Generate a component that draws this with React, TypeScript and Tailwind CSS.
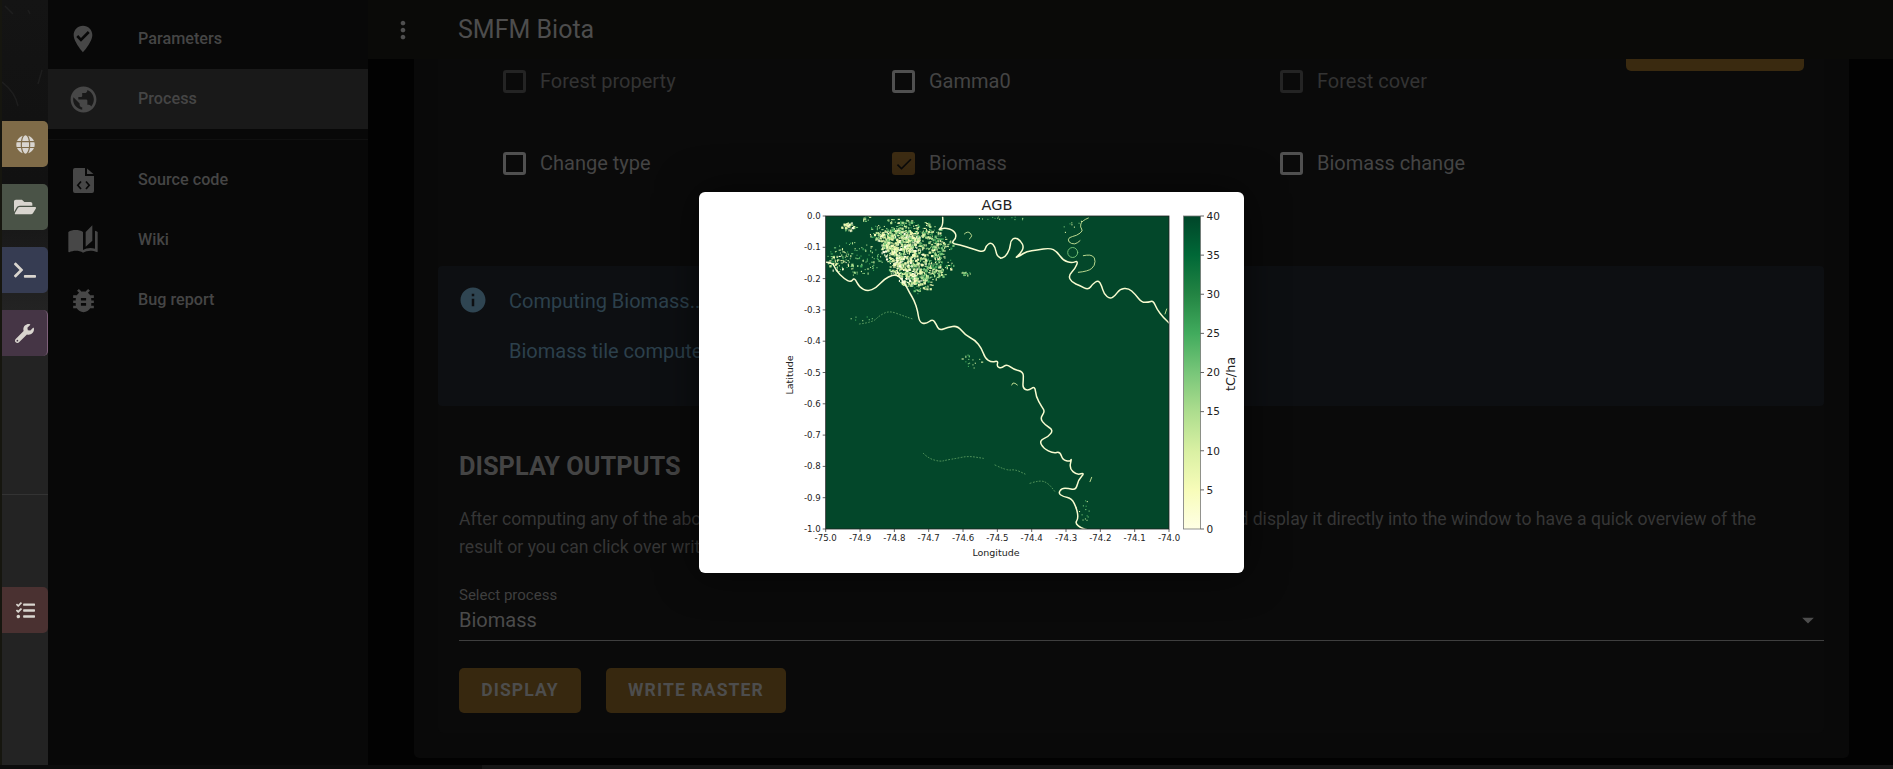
import { FaFolderOpen, FaGlobe, FaTasks, FaTerminal, FaWrench } from "react-icons/fa";
import { MdArrowDropDown, MdAutoStories, MdBugReport, MdCheck, MdInfo, MdMoreVert, MdPublic, MdWhereToVote } from "react-icons/md";
import type { ReactNode } from "react";

type Pt = [number, number];

// river traces read off the 3x crops: [origin x, origin y, crop points]
const crop = (ox: number, oy: number, pts: Pt[]): Pt[] => pts.map(([x, y]) => [ox + x / 3, oy + y / 3]);

const smooth = (pts: Pt[]) => {
  let d = `M${pts[0][0]} ${pts[0][1]}`;
  for (let i = 1; i < pts.length - 1; i++) {
    const mx = (pts[i][0] + pts[i + 1][0]) / 2;
    const my = (pts[i][1] + pts[i + 1][1]) / 2;
    d += `Q${pts[i][0]} ${pts[i][1]} ${mx} ${my}`;
  }
  const last = pts[pts.length - 1];
  return `${d}L${last[0]} ${last[1]}`;
};

const mainRiver = [
  ...crop(826, 214, [[0, 145], [20, 145], [30, 170], [55, 195], [75, 205], [85, 190], [100, 220], [125, 232], [150, 222], [175, 195], [200, 183], [215, 183], [235, 205], [250, 235], [265, 260], [275, 290], [280, 325], [300, 330], [320, 315], [330, 330], [340, 350], [365, 340], [395, 335]]),
  ...crop(930, 330, [[105, 15], [135, 30], [155, 55], [165, 85], [185, 97], [205, 92], [200, 110], [215, 115], [230, 102], [250, 118], [280, 125], [280, 150], [278, 175], [295, 182], [315, 168], [318, 200], [335, 230], [345, 245], [330, 265], [345, 285]]),
  ...crop(900, 430, [[460, 0], [445, 20], [418, 32], [430, 55], [460, 70], [480, 65], [488, 90], [510, 95], [515, 85], [508, 115], [530, 135], [555, 128], [535, 150], [528, 180], [505, 175], [485, 175], [475, 190], [490, 200], [515, 205], [530, 235], [535, 265], [525, 280], [545, 295], [565, 300]]),
];

const topRiver = [
  ...crop(826, 214, [[350, 10], [352, 35], [335, 50], [355, 40], [385, 50], [392, 70], [375, 88], [400, 92], [440, 105], [475, 115], [480, 95], [495, 85], [508, 100], [512, 125], [525, 132]]),
  ...crop(1000, 214, [[0, 133], [15, 130], [30, 105], [32, 80], [45, 70], [62, 80], [72, 100], [60, 120], [45, 132], [60, 125], [80, 112], [110, 108], [150, 102], [170, 112], [190, 140], [215, 147], [235, 140], [225, 165], [205, 185], [215, 205], [240, 215], [265, 228], [278, 210], [295, 198], [305, 215], [312, 240], [330, 255], [345, 245], [360, 225], [385, 222], [405, 240], [425, 265], [445, 265], [460, 260], [470, 285], [490, 310], [508, 328]]),
];

const thinChannels = [
  crop(1000, 214, [[235, 175], [265, 172], [285, 155], [285, 130], [270, 122], [250, 125]]),
  crop(1000, 214, [[265, 12], [245, 20], [240, 40], [250, 50], [230, 65], [205, 70], [205, 85], [225, 92], [240, 80]]),
  crop(1000, 214, [[500, 285], [495, 300]]),
  crop(826, 214, [[415, 60], [425, 50], [440, 65], [430, 75]]),
  crop(930, 330, [[245, 165], [248, 155], [262, 165]]),
  crop(900, 430, [[575, 142], [570, 155]]),
];

const faintChannels = [
  crop(900, 430, [[70, 70], [85, 85], [120, 95], [140, 90], [170, 85], [205, 78], [250, 85]]),
  crop(900, 430, [[285, 105], [320, 122], [345, 118], [375, 132]]),
  crop(900, 430, [[390, 160], [420, 150], [445, 160], [465, 185]]),
  crop(826, 214, [[100, 330], [140, 325], [160, 305], [190, 290], [230, 305], [260, 315]]),
];

// seeded scatter for the cleared patches around the town
const speckle = (() => {
  let s = 41;
  const rnd = () => {
    s = (s + 0x6d2b79f5) | 0;
    let t = Math.imul(s ^ (s >>> 15), 1 | s);
    t = (t + Math.imul(t ^ (t >>> 7), 61 | t)) ^ t;
    return ((t ^ (t >>> 14)) >>> 0) / 4294967296;
  };
  const out: { x: number; y: number; w: number; h: number; c: string }[] = [];
  const bright = ["#f7fcb9", "#e6f5a8", "#d9f0a3", "#ffffe0", "#addd8e", "#78c679"];
  const dim = ["#78c679", "#addd8e", "#41ab5d", "#d9f0a3"];
  const add = (n: number, cx: number, cy: number, rx: number, ry: number, colors: string[], big: number) => {
    for (let i = 0; i < n; i++) {
      const a = rnd() * Math.PI * 2;
      const r = Math.sqrt(rnd());
      out.push({
        x: cx + Math.cos(a) * r * rx,
        y: cy + Math.sin(a) * r * ry,
        w: rnd() < big ? 2.2 : 1.1,
        h: rnd() < big ? 2.2 : 1.1,
        c: colors[Math.floor(rnd() * colors.length)],
      });
    }
  };
  // town: lumpy patches, crop coordinates / 3
  const town: Pt[] = [[175, 70], [195, 90], [215, 60], [240, 80], [185, 105], [225, 115], [265, 95], [255, 65], [235, 145], [215, 165], [255, 170], [275, 135], [245, 195], [275, 190], [205, 130]];
  town.forEach(([x, y]) => add(62, 826 + x / 3, 214 + y / 3, 9, 7, bright, 0.55));
  const townEdge: Pt[] = [[300, 80], [330, 110], [310, 140], [350, 150], [290, 45], [320, 60], [300, 170], [240, 40], [285, 215], [350, 90], [325, 175], [205, 35], [160, 55]];
  townEdge.forEach(([x, y]) => add(42, 826 + x / 3, 214 + y / 3, 11, 8, [...dim, "#f7fcb9"], 0.35));
  add(34, 849, 226, 9, 5, bright, 0.6);
  add(10, 866, 218, 6, 3, dim, 0.3);
  add(130, 855, 258, 28, 17, dim, 0.15);
  add(34, 838, 262, 11, 9, bright, 0.35);
  add(16, 965, 273, 6, 2, dim, 0.3);
  add(14, 1000, 218, 28, 2, dim, 0);
  add(8, 1072, 226, 12, 8, dim, 0);
  add(16, 972, 360, 11, 8, dim, 0.1);
  add(7, 862, 318, 14, 3, dim, 0);
  add(14, 1082, 512, 8, 14, dim, 0);
  return out;
})();

const xTicks = ["-75.0", "-74.9", "-74.8", "-74.7", "-74.6", "-74.5", "-74.4", "-74.3", "-74.2", "-74.1", "-74.0"];
const yTicks = ["0.0", "-0.1", "-0.2", "-0.3", "-0.4", "-0.5", "-0.6", "-0.7", "-0.8", "-0.9", "-1.0"];
const barTicks = [40, 35, 30, 25, 20, 15, 10, 5, 0];

const PL = 825.7;
const PR = 1169;
const PT = 216;
const PB = 529;

const AgbPlot = () => (
  <svg viewBox="699 192 545 381" className="block h-full w-full" style={{ fontFamily: '"DejaVu Sans", sans-serif' }}>
    <defs>
      <linearGradient id="ylgn" x1="0" y1="0" x2="0" y2="1">
        <stop offset="0" stopColor="#004529" />
        <stop offset="0.125" stopColor="#006837" />
        <stop offset="0.25" stopColor="#238443" />
        <stop offset="0.375" stopColor="#41ab5d" />
        <stop offset="0.5" stopColor="#78c679" />
        <stop offset="0.625" stopColor="#addd8e" />
        <stop offset="0.75" stopColor="#d9f0a3" />
        <stop offset="0.875" stopColor="#f7fcb9" />
        <stop offset="1" stopColor="#ffffe5" />
      </linearGradient>
      <clipPath id="mapClip">
        <rect x={PL} y={PT} width={PR - PL} height={PB - PT} />
      </clipPath>
    </defs>
    <text x="997" y="210" fontSize="14.5" textAnchor="middle" fill="#222">AGB</text>

    <rect x={PL} y={PT} width={PR - PL} height={PB - PT} fill="#03472a" />
    <g clipPath="url(#mapClip)" fill="none" strokeLinecap="round" strokeLinejoin="round">
      {speckle.map((p, i) => (
        <rect key={i} x={p.x} y={p.y} width={p.w} height={p.h} fill={p.c} />
      ))}
      {faintChannels.map((c, i) => (
        <path key={i} d={smooth(c)} stroke="#8fcf80" strokeWidth="0.9" strokeDasharray="0.9 2.2" opacity="0.65" />
      ))}
      {thinChannels.map((c, i) => (
        <path key={i} d={smooth(c)} stroke="#cfe99b" strokeWidth="0.9" />
      ))}
      <circle cx="1072.7" cy="252.5" r="5" stroke="#78c679" strokeWidth="0.9" />
      <path d={smooth(mainRiver)} stroke="#f9fcd0" strokeWidth="1.5" />
      <path d={smooth(topRiver)} stroke="#f9fcd0" strokeWidth="1.5" />
    </g>
    <rect x={PL} y={PT} width={PR - PL} height={PB - PT} fill="none" stroke="#222" strokeWidth="0.8" />

    {xTicks.map((t, i) => {
      const x = PL + (i * (PR - PL)) / 10;
      return (
        <g key={t}>
          <line x1={x} x2={x} y1={PB} y2={PB + 3} stroke="#222" strokeWidth="0.7" />
          <text x={x} y={PB + 12} fontSize="8.6" textAnchor="middle" fill="#222">{t}</text>
        </g>
      );
    })}
    {yTicks.map((t, i) => {
      const y = PT + (i * (PB - PT)) / 10;
      return (
        <g key={t}>
          <line x1={PL - 3} x2={PL} y1={y} y2={y} stroke="#222" strokeWidth="0.7" />
          <text x={PL - 5} y={y + 3} fontSize="8.6" textAnchor="end" fill="#222">{t}</text>
        </g>
      );
    })}
    <text x="996" y="556" fontSize="9.5" textAnchor="middle" fill="#222">Longitude</text>
    <text transform="translate(793 375) rotate(-90)" fontSize="9.5" textAnchor="middle" fill="#222">Latitude</text>

    <rect x="1183.6" y={PT} width="17" height={PB - PT} fill="url(#ylgn)" stroke="#777" strokeWidth="0.8" />
    {barTicks.map((t) => {
      const y = PT + ((40 - t) / 40) * (PB - PT);
      return (
        <g key={t}>
          <line x1="1200.6" x2="1204" y1={y} y2={y} stroke="#222" strokeWidth="0.7" />
          <text x="1206.5" y={y + 3.8} fontSize="10.5" fill="#222">{t}</text>
        </g>
      );
    })}
    <text transform="translate(1235 374) rotate(-90)" fontSize="12.8" textAnchor="middle" fill="#222">tC/ha</text>
  </svg>
);

const FileCodeIcon = () => (
  <svg width="21" height="25" viewBox="0 0 21 25">
    <path d="M2 0h10v8h9v15a2 2 0 0 1-2 2H2a2 2 0 0 1-2-2V2a2 2 0 0 1 2-2z" fill="currentColor" />
    <path d="M14 .5L20.5 6H14z" fill="currentColor" />
    <path d="M8 13.5l-3.2 3.7L8 21M13 13.5l3.2 3.7L13 21" fill="none" stroke="#080808" strokeWidth="1.7" />
  </svg>
);

const RailButton = ({ color, icon, className = "" }: { color: string; icon: ReactNode; className?: string }) => (
  <div className={`flex h-[46px] w-[46px] items-center justify-center rounded-r-[5px] text-[#d9d5cf] ${color} ${className}`}>
    {icon}
  </div>
);

const NavItem = ({ icon, label, active }: { icon: ReactNode; label: string; active?: boolean }) => (
  <div className={`flex h-[60px] items-center ${active ? "bg-[#191919]" : ""}`}>
    <div className="flex w-[70px] justify-center text-[#474747]">{icon}</div>
    <span className="ml-5 text-[16.2px] font-medium text-[#454545]">{label}</span>
  </div>
);

const Check = ({ label, checked, disabled }: { label: string; checked?: boolean; disabled?: boolean }) => (
  <div className="flex h-[23px] items-center gap-[14px]">
    {checked ? (
      <div className="flex h-[23px] w-[23px] items-center justify-center rounded-[3px] bg-[#3d2c13] text-[#0a0a0a]">
        <MdCheck size={20} />
      </div>
    ) : (
      <div className={`h-[23px] w-[23px] rounded-[3px] border-[3px] ${disabled ? "border-[#242424]" : "border-[#505050]"}`} />
    )}
    <span className={`text-[20px] leading-[23px] ${disabled ? "text-[#333]" : "text-[#444]"}`}>{label}</span>
  </div>
);

const ActionButton = ({ label, className }: { label: string; className: string }) => (
  <div className={`flex h-[45px] items-center justify-center rounded-[5px] bg-[#37280f] text-[17.6px] font-bold tracking-[1.1px] text-[#4d4d4d] ${className}`}>
    {label}
  </div>
);

export default function App() {
  return (
    <div className="relative flex h-screen w-screen flex-col overflow-hidden bg-[#020202] font-['Roboto',sans-serif]">
      <div className="flex h-[765px] shrink-0">
        {/* icon rail */}
        <div className="relative flex w-12 shrink-0 flex-col border-l-2 border-[#16160f] bg-[linear-gradient(180deg,#141414_0px,#111_180px,#1a1a1a_240px,#232323_310px)]">
          <svg className="absolute left-0 top-0" width="46" height="120" viewBox="0 0 46 120" fill="none" stroke="#1e1e1e" strokeWidth="1.5">
            <path d="M0 82c8 6 14 14 16 24" />
            <path d="M3 6l8 8M26 10l2 4M40 70l-4 14" />
          </svg>
          <div className="relative flex flex-col gap-[17px] pt-[121px]">
            <RailButton color="bg-[#7f6b48]" icon={<FaGlobe size={19} />} />
            <RailButton color="bg-[#4a5347]" icon={<FaFolderOpen size={22} />} />
            <RailButton color="bg-[#363c52]" icon={<FaTerminal size={22} />} />
            <RailButton color="bg-[#453545]" className="border-r border-[#7d6079]" icon={<FaWrench size={19} />} />
          </div>
          <div className="mt-[138px] h-px bg-[#333]" />
          <RailButton color="bg-[#4a3131]" className="mt-[92px] h-[45px]" icon={<FaTasks size={19} />} />
        </div>

        {/* drawer */}
        <div className="w-80 shrink-0 bg-[#080808] pt-[9px]">
          <NavItem icon={<MdWhereToVote size={32} />} label="Parameters" />
          <NavItem icon={<MdPublic size={31} />} label="Process" active />
          <div className="my-[10px] h-px bg-[#101010]" />
          <NavItem icon={<FileCodeIcon />} label="Source code" />
          <NavItem icon={<MdAutoStories size={32} />} label="Wiki" />
          <NavItem icon={<MdBugReport size={31} />} label="Bug report" />
        </div>

        {/* main column */}
        <div className="flex min-w-0 flex-1 flex-col">
          <div className="flex h-[59px] shrink-0 items-center bg-[#0a0a08]">
            <div className="ml-[21px] flex w-7 justify-center text-[#4f4f4f]">
              <MdMoreVert size={28} />
            </div>
            <span className="ml-[41px] text-[25px] font-normal text-[#4d4d4d]">SMFM Biota</span>
          </div>

          <div className="ml-[46px] mr-[44px] flex h-[699px] shrink-0 flex-col rounded-b-[5px] bg-[#090909] pl-[24px] pr-[25px]">
            <div className="flex h-[674px] flex-col rounded-b-[5px] bg-[#0a0a0a]">
              <div className="flex justify-end pr-5">
                <div className="h-3 w-[178px] rounded-b-[5px] bg-[#3a2a10]" />
              </div>
              <div className="ml-[65px] mt-[-1px] grid grid-cols-[389px_388px_1fr] gap-y-[59px]">
                <Check label="Forest property" disabled />
                <Check label="Gamma0" />
                <Check label="Forest cover" disabled />
                <Check label="Change type" />
                <Check label="Biomass" checked />
                <Check label="Biomass change" />
              </div>

              <div className="mt-[91px] flex h-[140px] shrink-0 gap-[21px] rounded-[4px] bg-[#0d0f12] pl-[20px] pt-[20px] text-[20px] leading-[30px] text-[#2c404c]">
                <MdInfo size={30} className="mt-[-1px] shrink-0 text-[#2f4552]" />
                <div className="flex flex-col gap-[20px]">
                  <span>Computing Biomass...</span>
                  <span>Biomass tile computed</span>
                </div>
              </div>

              <div className="pl-[21px]">
                <h2 className="mt-[44px] text-[25.4px] font-bold leading-[32px] text-[#444]">DISPLAY OUTPUTS</h2>
                <p className="mt-[23px] pr-[20px] text-[17.6px] leading-[28px] text-[#363636]">
                  After computing any of the above processes, you can select this output from the dropdown menu and display it directly into the window to have a quick overview of the
                  <br />
                  result or you can click over write raster to store it in your workspace.
                </p>

                <div className="mt-[25px] border-b border-[#3f3f3f] pb-[8px]">
                  <div className="text-[15px] leading-[18px] text-[#3f3f3f]">Select process</div>
                  <div className="mt-[4px] flex h-[24px] items-center justify-between">
                    <span className="text-[20px] leading-[24px] text-[#4b4b4b]">Biomass</span>
                    <MdArrowDropDown size={28} className="mr-[2px] text-[#4d4d4d]" />
                  </div>
                </div>

                <div className="mt-[27px] flex gap-[25px]">
                  <ActionButton label="DISPLAY" className="w-[122px]" />
                  <ActionButton label="WRITE RASTER" className="w-[180px]" />
                </div>
              </div>
            </div>
          </div>
        </div>
      </div>
      <div className="flex flex-1">
        <div className="w-[482px] bg-[#0c0c0c]" />
        <div className="flex-1 bg-[#161616]" />
      </div>

      {/* plot dialog */}
      <div className="absolute left-[699px] top-[192px] h-[381px] w-[545px] overflow-hidden rounded-[6px] bg-white shadow-[0_0_40px_rgba(0,0,0,0.6)]">
        <AgbPlot />
      </div>
    </div>
  );
}
